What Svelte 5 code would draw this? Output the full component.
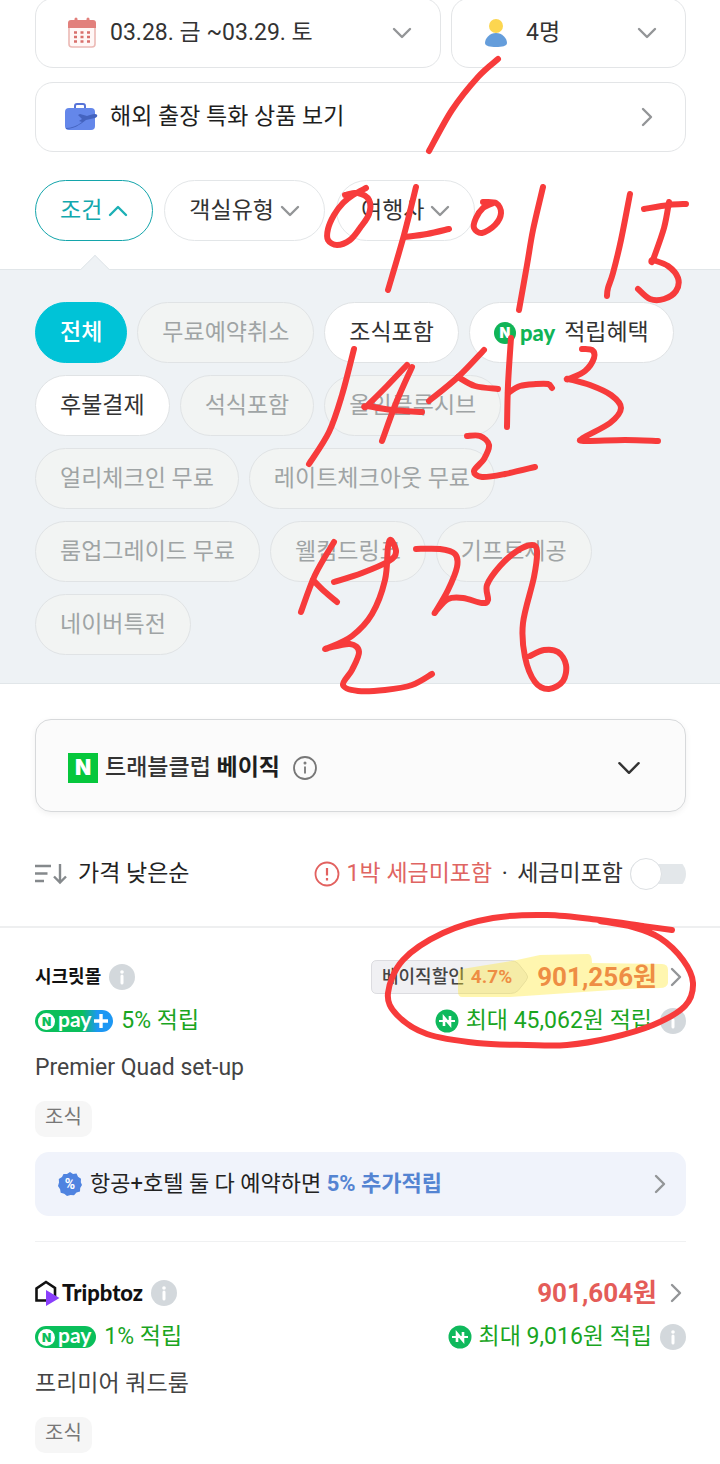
<script>
  let conditionOpen = $state(true);
  let taxIncluded = $state(false);
  let selected = $state('전체');

  const filters = [
    { name: '전체' },
    { name: '무료예약취소', disabled: true },
    { name: '조식포함' },
    { name: '적립혜택', npay: true },
    { name: '후불결제' },
    { name: '석식포함', disabled: true },
    { name: '올인클루시브', disabled: true },
    { name: '얼리체크인 무료', disabled: true },
    { name: '레이트체크아웃 무료', disabled: true },
    { name: '룸업그레이드 무료', disabled: true },
    { name: '웰컴드링크', disabled: true },
    { name: '기프트제공', disabled: true },
    { name: '네이버특전', disabled: true }
  ];

  const offers = [
    {
      seller: '시크릿몰',
      discount: '4.7%',
      price: '901,256',
      plus: true,
      rate: '5%',
      point: '45,062',
      room: 'Premier Quad set-up',
      promo: true
    },
    {
      seller: 'Tripbtoz',
      price: '901,604',
      rate: '1%',
      point: '9,016',
      room: '프리미어 쿼드룸'
    }
  ];

  // pen strokes, as x,y points (a repeated point makes a sharp corner)
  const strokes = [
    [[498, 59], [478, 77], [452, 110], [429, 151]],
    [[345, 195], [358, 193], [369, 200], [369, 214], [360, 228], [350, 240], [337, 245], [328, 240], [328, 229], [334, 215], [343, 203], [353, 195], [366, 188]],
    [[416, 187], [404, 235], [388, 290]],
    [[405, 237], [427, 234], [449, 229]],
    [[483, 202], [496, 203], [501, 213], [495, 225], [482, 233], [474, 228], [476, 218], [483, 208], [493, 203]],
    [[543, 187], [533, 230], [527, 265], [519, 310]],
    [[630, 194], [621, 240], [613, 273], [608, 288], [607, 296]],
    [[644, 209], [669, 205], [686, 204]],
    [[669, 202], [664, 228], [653, 260], [653, 260], [668, 266], [678, 278], [676, 291], [664, 299], [650, 299], [638, 289]],
    [[354, 349], [342, 395], [329, 432], [309, 464]],
    [[407, 365], [387, 386], [367, 406], [367, 406], [392, 410], [422, 412]],
    [[412, 367], [396, 403], [382, 441]],
    [[484, 350], [458, 377], [429, 401]],
    [[458, 377], [475, 386], [498, 389]],
    [[511, 338], [508, 385], [507, 427]],
    [[508, 393], [520, 386], [536, 384], [548, 384], [552, 388]],
    [[467, 436], [480, 436], [489, 445], [484, 459], [474, 471], [482, 477], [505, 474], [535, 467]],
    [[582, 349], [592, 350], [594, 358], [585, 371], [569, 379], [569, 379], [590, 385], [611, 395], [621, 408], [610, 423], [583, 438], [585, 441], [625, 440], [658, 441]],
    [[334, 542], [315, 575], [301, 612]],
    [[313, 580], [324, 591], [337, 602]],
    [[334, 582], [362, 573], [389, 561], [396, 552], [391, 540], [388, 547], [385, 580], [372, 614], [352, 636], [328, 648], [328, 648], [350, 644], [359, 652], [352, 670], [343, 685], [358, 691], [385, 690], [412, 685], [432, 674]],
    [[416, 549], [440, 549], [455, 554], [457, 567], [448, 590], [436, 611], [436, 611], [448, 599], [463, 598], [482, 603], [488, 600], [487, 585], [500, 566], [517, 551], [532, 545], [537, 551], [534, 577], [523, 623], [525, 657], [535, 682], [549, 689], [563, 681], [566, 665], [558, 652], [544, 650], [530, 656]],
    [[672, 930], [643, 926], [600, 920], [547, 915], [493, 918], [443, 933], [403, 960], [388, 993], [397, 1015], [427, 1034], [477, 1043], [527, 1045], [567, 1045], [610, 1038], [653, 1025], [685, 1006], [693, 983], [683, 960], [660, 938], [633, 927], [600, 921]]
  ];

  function smoothPath(points) {
    let d = `M${points[0]}`;
    for (let i = 0; i < points.length - 1; i++) {
      const p0 = points[i - 1] || points[i];
      const p1 = points[i];
      const p2 = points[i + 1];
      const p3 = points[i + 2] || p2;
      const c1 = [p1[0] + (p2[0] - p0[0]) / 6, p1[1] + (p2[1] - p0[1]) / 6];
      const c2 = [p2[0] - (p3[0] - p1[0]) / 6, p2[1] - (p3[1] - p1[1]) / 6];
      d += `C${c1} ${c2} ${p2}`;
    }
    return d;
  }
</script>

{#snippet chevron(dir)}
  <svg class="chevron {dir}" viewBox="0 0 20 20" width="20" height="20" aria-hidden="true">
    {#if dir === 'down'}
      <path d="M2 6l8 8 8-8" />
    {:else if dir === 'up'}
      <path d="M2 14l8-8 8 8" />
    {:else}
      <path d="M6 2l8 8-8 8" />
    {/if}
  </svg>
{/snippet}

{#snippet info()}
  <button class="info" aria-label="안내">
    <svg viewBox="0 0 26 26" width="26" height="26">
      <circle cx="13" cy="13" r="13" fill="#d3d8dc" />
      <circle cx="13" cy="8" r="1.8" fill="#fff" />
      <path d="M13 12v7" stroke="#fff" stroke-width="3" stroke-linecap="round" />
    </svg>
  </button>
{/snippet}

<div class="page">
  <section class="search">
    <div class="search-row">
      <button class="field">
        <svg viewBox="0 0 28 32" width="28" height="32" aria-hidden="true">
          <rect x="1" y="5" width="26" height="25" rx="3" fill="#fff7f6" stroke="#ecb9b5" stroke-width="1.6" />
          <path d="M0 11V6a3 3 0 0 1 3-3h22a3 3 0 0 1 3 3v5z" fill="#e2807c" />
          <path d="M8 2v3M20 2v3" stroke="#e2807c" stroke-width="3" stroke-linecap="round" />
          <path d="M6 15.5h16M6 20h16M6 24.500h16" stroke="#d9706c" stroke-width="2.6" stroke-dasharray="3 3.5" />
        </svg>
        <span>03.28. 금 ~03.29. 토</span>
        {@render chevron('down')}
      </button>
      <button class="field">
        <svg viewBox="0 0 24 30" width="24" height="30" aria-hidden="true">
          <circle cx="12" cy="8" r="7" fill="#fcd650" />
          <path d="M12 15c6 0 11 5 11 10 0 3-5 4-11 4S1 28 1 25c0-5 5-10 11-10z" fill="#649ddb" />
        </svg>
        <span class="people">4명</span>
        {@render chevron('down')}
      </button>
    </div>
    <a class="field" href="#business">
      <svg viewBox="0 0 34 30" width="34" height="30" aria-hidden="true">
        <path d="M11 7V4a2 2 0 0 1 2-2h6a2 2 0 0 1 2 2v3" fill="none" stroke="#5673d8" stroke-width="2" />
        <rect x="1" y="6" width="30" height="22" rx="4" fill="#6487ea" />
        <path d="M2 27c7 0 14-4 20-9l9-2c3-1 3-4 0-4-3 0-5 1-8 2l-7-2-2 1 4 4-3 2 3 1c-5 4-11 6-16 6z" fill="#4463bf" />
      </svg>
      <span class="strong">해외 출장 특화 상품 보기</span>
      {@render chevron('right')}
    </a>
    <div class="tabs">
      <button class="pill tab" class:open={conditionOpen} onclick={() => (conditionOpen = !conditionOpen)}>
        조건 {@render chevron(conditionOpen ? 'up' : 'down')}
      </button>
      <button class="pill tab">객실유형 {@render chevron('down')}</button>
      <button class="pill tab">여행사 {@render chevron('down')}</button>
    </div>
  </section>

  {#if conditionOpen}
    <section class="conditions">
      {#each filters as f}
        <button class="pill" class:on={selected === f.name} disabled={f.disabled} onclick={() => (selected = f.name)}>
          {#if f.npay}
            <span class="npay-mark"><i>N</i><b>pay</b></span>
          {/if}
          {f.name}
        </button>
      {/each}
    </section>
  {/if}

  <main>
    <button class="club">
      <span class="naver">N</span>
      <span class="club-name">트래블클럽 <b>베이직</b></span>
      <svg viewBox="0 0 24 24" width="24" height="24" fill="none" stroke="#777" stroke-width="1.8" aria-hidden="true">
        <circle cx="12" cy="12" r="11" />
        <path d="M12 10.5v7" />
        <circle cx="12" cy="7" r=".6" />
      </svg>
      {@render chevron('down')}
    </button>

    <div class="sort">
      <button class="sort-by">
        <svg viewBox="0 0 32 22" width="32" height="22" fill="none" stroke="#85898c" stroke-width="2.4" aria-hidden="true">
          <path d="M0 3h16M0 10.5h12.5M0 18h9M25 1v18M19 13.5l6 6 6-6" />
        </svg>
        가격 낮은순
      </button>
      <div class="tax">
        <svg viewBox="0 0 26 26" width="26" height="26" fill="none" stroke="#e2615f" stroke-width="1.8" aria-hidden="true">
          <circle cx="13" cy="13" r="11.5" />
          <path d="M13 7v7.5M13 17v2.4" stroke-width="2.2" />
        </svg>
        <span class="warn">1박 세금미포함</span>
        <span class="dot">·</span>
        <label for="tax">세금미포함</label>
        <input id="tax" type="checkbox" role="switch" bind:checked={taxIncluded} />
      </div>
    </div>
  </main>

  <ul class="offers">
    {#each offers as o}
      <li>
        <div class="line title">
          {#if o.seller === 'Tripbtoz'}
            <span class="tripbtoz">
              <svg viewBox="0 0 25 28" width="25" height="28" aria-hidden="true">
                <path d="M12 21.5H1.5V9.5L11 3l9 6v9" fill="none" stroke="#111" stroke-width="2.6" />
                <path d="M11 11l13.5 8L11 27z" fill="#8a3ffc" />
              </svg>
              {o.seller}
            </span>
          {:else}
            <strong class="seller">{o.seller}</strong>
          {/if}
          {@render info()}
          <a class="price" href="#offer">
            {#if o.discount}
              <span class="discount">
                <svg viewBox="0 0 158 34" preserveAspectRatio="none" aria-hidden="true">
                  <path d="M6 .5h134q5 0 8 3l8 10q3 3.500 0 7l-8 10q-3 3-8 3H6q-5.500 0-5.500-5.500V6Q.5.5 6 .5z" fill="#f0f0f3" stroke="#dcdce0" />
                </svg>
                <span>베이직할인</span>
                <b>{o.discount}</b>
              </span>
            {/if}
            <strong>{o.price}원</strong>
            {@render chevron('right')}
          </a>
        </div>
        <div class="line reward">
          <span class="npay-badge" class:plus={o.plus}>
            <i>N</i><b>pay</b>
            {#if o.plus}
              <svg viewBox="0 0 14 14" width="14" height="14" aria-hidden="true">
                <path d="M7 0v14M0 7h14" stroke="#fff" stroke-width="3.4" />
              </svg>
            {/if}
          </span>
          <span>{o.rate} 적립</span>
          <span class="max">
            <svg viewBox="0 0 24 24" width="24" height="24" aria-hidden="true">
              <circle cx="12" cy="12" r="11.5" fill="#0fb95c" />
              <path d="M4 12h16" stroke="#fff" stroke-width="2" />
              <path d="M9 17V8.500l6 7V7" fill="none" stroke="#fff" stroke-width="2.6" />
            </svg>
            최대 {o.point}원 적립
          </span>
          {@render info()}
        </div>
        <p class="room">{o.room}</p>
        <span class="tag">조식</span>
        {#if o.promo}
          <a class="promo" href="#promo">
            <svg viewBox="0 0 24 24" width="24" height="24" aria-hidden="true">
              <path d="M12 0l3 2 3.500-.5L20 4.700l3 2-.2 3.600L24 13l-1.800 3-.2 3.500-3.500 1L16 23.300l-3.500-.3L9 24l-2.800-2.300-3.500-1-.6-3.500L0 14l1-3.500L.8 7 4 5l1.500-3L9 2z" fill="#4f83e0" />
              <text x="12" y="17" text-anchor="middle">%</text>
            </svg>
            <span>항공+호텔 둘 다 예약하면 <b>5% 추가적립</b></span>
            {@render chevron('right')}
          </a>
        {/if}
      </li>
    {/each}
  </ul>

  <svg class="ink" viewBox="0 0 720 1464" aria-hidden="true">
    <path class="marker" d="M462 969L517 960 540 955 588 954Q592 954 592 963L662 964Q668 964 668 970V983Q667 988 660 988L627 989 510 997H462Q458 997 458 991V974Q458 970 462 969z" />
    {#each strokes as points}
      <path class="pen" d={smoothPath(points)} />
    {/each}
  </svg>
</div>

<style>
:global(body) {
  background: #fff;
}
.page {
  position: relative;
  overflow: hidden;
  font-family: Roboto, "Noto Sans CJK KR", sans-serif;
  font-size: 23px;
  line-height: 32px;
  color: #333;
}
button, a {
  font: inherit;
  color: inherit;
  text-decoration: none;
  background: none;
  border: 0;
  padding: 0;
  cursor: pointer;
}
svg {
  display: block;
  flex: none;
}
.chevron {
  fill: none;
  stroke: #939597;
  stroke-width: 2.4;
  stroke-linecap: round;
  stroke-linejoin: round;
}

.search {
  padding: 0 34px 28px 35px;
  margin-top: -2px;
}
.search-row {
  display: grid;
  grid-template-columns: minmax(0, 1fr) 235px;
  gap: 10px;
  margin-bottom: 14px;
}
.field {
  display: flex;
  align-items: center;
  gap: 14px;
  box-sizing: border-box;
  height: 70px;
  padding: 0 28px 0 32px;
  border: 1px solid #e3e5e7;
  border-radius: 18px;
  background: #fff;
}
.field span {
  flex: 1;
  text-align: left;
}
.field .people {
  padding-left: 4px;
}
.field .strong {
  color: #1e1e1e;
}
a.field {
  padding-left: 28px;
  gap: 12px;
}
.tabs {
  display: flex;
  gap: 11px;
  margin-top: 28px;
}
.pill {
  display: flex;
  align-items: center;
  height: 61px;
  padding: 0 24px;
  border: 1px solid #e3e6e8;
  border-radius: 31px;
  background: #fff;
  white-space: nowrap;
}
.tab {
  gap: 6px;
}
.tab.open {
  border-color: #14a5ab;
  color: #12a8ae;
}
.tab.open .chevron {
  stroke: #1cb0b5;
}

.conditions {
  position: relative;
  display: flex;
  flex-wrap: wrap;
  gap: 12px 10px;
  padding: 32px 34px 28px 35px;
  background: #eef2f5;
  border: solid #e1e6e9;
  border-width: 1px 0;
}
.conditions::before {
  content: "";
  position: absolute;
  top: -11px;
  left: 84px;
  width: 21px;
  height: 21px;
  background: #eef2f5;
  border: solid #e1e6e9;
  border-width: 1px 0 0 1px;
  transform: rotate(45deg);
  clip-path: polygon(0 0, 100% 0, 0 100%);
}
.conditions .pill {
  border-color: #e0e3e5;
}
.conditions .pill:disabled {
  background: #f2f4f3;
  color: #9fa4a5;
  cursor: default;
}
.conditions .pill.on {
  background: #00c3d7;
  border-color: #00c3d7;
  color: #fff;
  font-weight: 500;
}
.npay-mark, .npay-badge {
  display: flex;
  align-items: center;
  font-family: Lato, sans-serif;
}
.npay-mark {
  gap: 4px;
  margin-right: 9px;
  color: #10b457;
  font-size: 22px;
}
.npay-mark b {
  font-weight: 900;
}
.npay-mark i, .npay-badge i {
  font: 900 14px/22px Inter, sans-serif;
  width: 22px;
  height: 22px;
  border-radius: 50%;
  text-align: center;
  background: #10b457;
  color: #fff;
}

main {
  padding: 35px 34px 0 35px;
}
.club {
  display: flex;
  align-items: center;
  width: 100%;
  height: 93px;
  padding: 4px 44px 0 32px;
  border: 1px solid #d7d9db;
  border-radius: 16px;
  background: #fbfbfb;
  box-shadow: 0 2px 6px rgba(0, 0, 0, 0.06);
}
.club .chevron {
  margin-left: auto;
  width: 24px;
  height: 24px;
  stroke: #333;
  stroke-width: 2;
}
.naver {
  width: 30px;
  height: 30px;
  background: #06c73c;
  color: #fff;
  font: 900 21px/30px Inter, sans-serif;
}
.club-name {
  margin: 0 13px 0 7px;
  font-weight: 500;
}
.club-name b {
  color: #1e1e1e;
}
.sort {
  display: flex;
  justify-content: space-between;
  align-items: center;
  height: 114px;
  padding-top: 10px;
  box-sizing: border-box;
}
.sort-by {
  display: flex;
  align-items: center;
  gap: 11px;
  color: #222;
}
.tax {
  display: flex;
  align-items: center;
}
.warn {
  margin-left: 7px;
  color: #df6562;
}
.dot {
  width: 25px;
  text-align: center;
}
.tax input {
  appearance: none;
  position: relative;
  width: 56px;
  height: 32px;
  margin: 0 0 0 7px;
  background: linear-gradient(#e3e7ea, #e3e7ea) center / 56px 20px no-repeat;
  border-radius: 16px;
}
.tax input::before {
  content: "";
  position: absolute;
  left: 0;
  width: 30px;
  height: 30px;
  border: 1px solid #dde0e3;
  border-radius: 50%;
  background: #fff;
}
.tax input:checked::before {
  left: auto;
  right: 0;
}

.offers {
  list-style: none;
  margin: 0;
  padding: 0 34px 0 35px;
  border-top: 2px solid #eeeff0;
}
.offers li {
  padding: 26px 0 25px;
}
.offers li + li {
  padding-top: 28px;
  border-top: 1px solid #f0f1f2;
}
.line {
  display: flex;
  align-items: center;
}
.title {
  height: 46px;
}
.seller {
  font-size: 18px;
  color: #111;
}
.info {
  margin-left: 8px;
}
.tripbtoz {
  display: flex;
  align-items: center;
  gap: 2px;
  font: 900 22px/28px Lato, sans-serif;
  color: #111;
}
.price {
  display: flex;
  align-items: center;
  margin-left: auto;
  color: #e45c58;
  font-size: 26px;
}
.price .chevron {
  margin-left: 9px;
}
.discount {
  position: relative;
  display: flex;
  align-items: center;
  gap: 6px;
  height: 34px;
  padding: 0 16px 0 11px;
  margin-right: 9px;
  font-size: 18px;
  font-weight: 500;
  color: #444;
}
.discount svg {
  position: absolute;
  inset: 0;
  width: 100%;
  height: 100%;
}
.discount span, .discount b {
  position: relative;
}
.discount b {
  color: #e45c58;
  font-size: 19px;
}
.reward {
  height: 42px;
  color: #1aa51f;
}
.npay-badge {
  gap: 3px;
  height: 22px;
  padding: 0 5px 0 3px;
  margin-right: 8px;
  border-radius: 12px;
  background: #0abf5b;
  color: #fff;
  font-size: 21px;
}
.npay-badge.plus {
  background: linear-gradient(90deg, #0abf5b 60%, #1c97f3 80%);
}
.npay-badge b {
  line-height: 20px;
  height: 24px;
}
.npay-badge i {
  font-size: 12px;
  line-height: 17px;
  width: 17px;
  height: 17px;
  background: #fff;
  color: #0abf5b;
}
.max {
  display: flex;
  align-items: center;
  gap: 7px;
  margin-left: auto;
}
.room {
  margin: 10px 0 17px;
  color: #444;
}
.tag {
  display: block;
  width: fit-content;
  padding: 0 10px 4px;
  border-radius: 10px;
  background: #f6f6f6;
  color: #777;
  font-size: 20px;
}
.promo {
  display: flex;
  align-items: center;
  gap: 8px;
  height: 64px;
  padding: 0 16px 0 23px;
  margin-top: 15px;
  border-radius: 14px;
  background: #f0f3fb;
  color: #222;
  font-size: 22px;
}
.promo b {
  color: #5484d2;
}
.promo .chevron {
  margin-left: auto;
}
.promo text {
  font: 700 14px Roboto, sans-serif;
  fill: #fff;
}

.ink {
  position: absolute;
  top: 0;
  left: 0;
  width: 100%;
  pointer-events: none;
}
.pen {
  fill: none;
  stroke: #f73b3b;
  stroke-width: 6;
  stroke-linecap: round;
  stroke-linejoin: round;
}
.marker {
  fill: #ffe620;
  opacity: 0.36;
}
</style>
